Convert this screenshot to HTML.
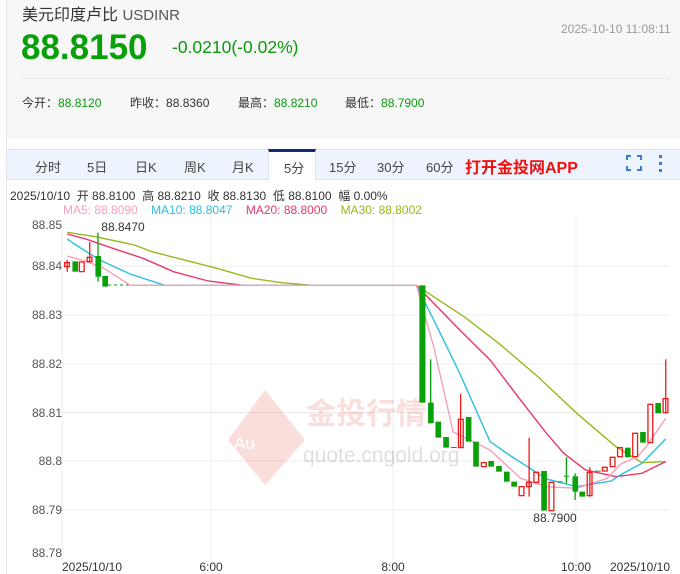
<!DOCTYPE html>
<html><head><meta charset="utf-8"><style>
*{margin:0;padding:0;box-sizing:border-box}
body{width:680px;height:574px;background:#fff;font-family:"Liberation Sans","Noto Sans CJK SC",sans-serif;position:relative;overflow:hidden}
.a{position:absolute;white-space:nowrap}
.g{color:#0a9a0a}
</style></head><body>
<div class="a" style="left:0;top:0;width:7px;height:574px;background:#fff;border-right:1px solid #e6e6e6"></div>
<div class="a" style="left:7px;top:0;width:673px;height:139px;background:#f7f7f7"></div>
<div class="a" style="left:22px;top:1px;font-size:16px;color:#333">美元印度卢比 <span style="font-size:15px;color:#555">USDINR</span></div>
<div class="a" style="left:561px;top:22px;font-size:12px;color:#999">2025-10-10 11:08:11</div>
<div class="a g" style="left:21px;top:28px;font-size:35px;font-weight:bold;color:#08a008">88.8150</div>
<div class="a g" style="left:172px;top:37px;font-size:17.5px">-0.0210(-0.02%)</div>
<div class="a" style="left:22px;top:78px;width:648px;height:1px;background:#e6e6e6"></div>
<div class="a" style="left:22px;top:94px;font-size:12px;color:#333">今开：<span class="g">88.8120</span></div>
<div class="a" style="left:130px;top:94px;font-size:12px;color:#333">昨收：<span>88.8360</span></div>
<div class="a" style="left:238px;top:94px;font-size:12px;color:#333">最高：<span class="g">88.8210</span></div>
<div class="a" style="left:345px;top:94px;font-size:12px;color:#333">最低：<span class="g">88.7900</span></div>
<div class="a" style="left:7px;top:149px;width:673px;height:31px;background:#eef4fd;border-top:1px solid #dde6f3;border-bottom:1px solid #dde6f3"></div>
<div class="a" style="left:268px;top:149px;width:48px;height:32px;background:#fff;border-top:3px solid #0d2a7d;border-left:1px solid #dde6f3;border-right:1px solid #dde6f3"></div>
<div class="a" style="top:157px;left:35px;font-size:13px;color:#444">分时</div>
<div class="a" style="top:157px;left:87px;font-size:13px;color:#444">5日</div>
<div class="a" style="top:157px;left:135px;font-size:13px;color:#444">日K</div>
<div class="a" style="top:157px;left:184px;font-size:13px;color:#444">周K</div>
<div class="a" style="top:157px;left:232px;font-size:13px;color:#444">月K</div>
<div class="a" style="top:158px;left:284px;font-size:13px;color:#444">5分</div>
<div class="a" style="top:157px;left:329px;font-size:13px;color:#444">15分</div>
<div class="a" style="top:157px;left:377px;font-size:13px;color:#444">30分</div>
<div class="a" style="top:157px;left:426px;font-size:13px;color:#444">60分</div>
<div class="a" style="top:154px;left:465px;font-size:16px;font-weight:bold;color:#f01010">打开金投网APP</div>
<svg class="a" style="left:626px;top:155px" width="16" height="16" viewBox="0 0 16 16" fill="none" stroke="#3a7bd5" stroke-width="2"><path d="M1 5V1H5M11 1H15V5M15 11V15H11M5 15H1V11"/></svg>
<svg class="a" style="left:658px;top:155px" width="6" height="18"><rect x="1" y="0" width="3" height="3" fill="#3a7bd5"/><rect x="1" y="7" width="3" height="3" fill="#3a7bd5"/><rect x="1" y="14" width="3" height="3" fill="#3a7bd5"/></svg>
<div class="a" style="left:10px;top:187px;font-size:12px;color:#333">2025/10/10 &nbsp;开 88.8100 &nbsp;高 88.8210 &nbsp;收 88.8130 &nbsp;低 88.8100 &nbsp;幅 0.00%</div>
<div class="a" style="left:63px;top:203px;font-size:12px"><span style="color:#f7a0ba">MA5: 88.8090</span>&nbsp;&nbsp;&nbsp; <span style="color:#2bbfe0">MA10: 88.8047</span>&nbsp;&nbsp;&nbsp; <span style="color:#e8396b">MA20: 88.8000</span>&nbsp;&nbsp;&nbsp; <span style="color:#99b81c">MA30: 88.8002</span></div>
<svg class="a" style="left:0;top:0" width="680" height="574">
<g stroke="#ececec" stroke-width="1">
<line x1="62" y1="266" x2="670" y2="266"/><line x1="62" y1="315" x2="670" y2="315"/><line x1="62" y1="364" x2="670" y2="364"/><line x1="62" y1="412.5" x2="670" y2="412.5"/><line x1="62" y1="461" x2="670" y2="461"/><line x1="62" y1="510" x2="670" y2="510"/>
<line x1="211" y1="218" x2="211" y2="562"/><line x1="393" y1="218" x2="393" y2="562"/><line x1="576" y1="218" x2="576" y2="562"/>
<line x1="62" y1="218" x2="62" y2="562"/>
</g>
<g font-size="12" fill="#555" font-family="Liberation Sans" text-anchor="end">
<text x="62" y="229">88.85</text><text x="62" y="270">88.84</text><text x="62" y="319">88.83</text><text x="62" y="368">88.82</text><text x="62" y="417">88.81</text><text x="62" y="465">88.8</text><text x="62" y="514">88.79</text><text x="62" y="557">88.78</text>
</g>
<g font-size="12" fill="#333" font-family="Liberation Sans" text-anchor="middle">
<text x="92" y="571">2025/10/10</text><text x="211" y="571">6:00</text><text x="393" y="571">8:00</text><text x="576" y="571">10:00</text><text x="640" y="571">2025/10/10</text>
<text x="123" y="231">88.8470</text><text x="555" y="522">88.7900</text>
</g>
<g opacity="0.18">
<path d="M265 390L305 440L265 485L228 440Z" fill="#e05040"/>
<text x="234" y="449" font-size="17" fill="#fff" font-family="Liberation Sans">Au</text>
<text x="306" y="424" font-size="30" font-weight="bold" fill="#e05040" font-family="Noto Sans CJK SC">金投行情</text>
</g>
<text x="303" y="462" font-size="21" fill="#000" opacity="0.12" font-family="Liberation Sans">quote.cngold.org</text>
<line x1="108" y1="285" x2="416" y2="285" stroke="#0a9a0a" stroke-dasharray="3,3"/>
<g transform="translate(0,220) scale(0.4337,0.3333)" fill="none" stroke-width="1.4">
<polyline vector-effect="non-scaling-stroke" stroke="#99b81c" points="155,37 220,50 310,75 350,95 500,145 580,175 650,188 720,196 960,196 1070,290 1150,370 1240,470 1330,580 1420,680 1480,728 1535,725"/>
<polyline vector-effect="non-scaling-stroke" stroke="#e8396b" points="155,42 200,58 260,85 330,115 400,155 480,183 560,196 960,196 1060,330 1130,420 1200,540 1260,640 1300,700 1350,750 1420,770 1480,760 1535,725"/>
<polyline vector-effect="non-scaling-stroke" stroke="#2bbfe0" points="155,57 175,75 230,120 300,162 380,196 960,196 1000,300 1060,460 1130,665 1180,710 1260,777 1330,800 1410,783 1430,765 1480,730 1535,657"/>
<polyline vector-effect="non-scaling-stroke" stroke="#f7a0ba" points="155,108 200,125 240,145 300,196 960,196 1000,380 1045,636 1130,690 1200,775 1260,800 1330,805 1400,775 1430,733 1470,710 1490,680 1535,595"/>
</g>
<g transform="translate(0,220) scale(0.4337,0.3333)">
<g fill="#0aa00a" stroke="#0aa00a" stroke-width="3">
<line x1="226" y1="38" x2="226" y2="185"/><line x1="993" y1="418" x2="993" y2="610"/><line x1="1306" y1="712" x2="1306" y2="790"/><line x1="1326" y1="760" x2="1326" y2="840"/>
</g>
<g fill="#0aa00a">
<rect x="167" y="124" width="13" height="31"/><rect x="220" y="108" width="13" height="62"/><rect x="236" y="168" width="13" height="32"/>
<rect x="967" y="196" width="14" height="352"/><rect x="987" y="548" width="13" height="62"/><rect x="1004" y="605" width="13" height="48"/><rect x="1022" y="651" width="13" height="32"/><rect x="1040" y="681" width="13" height="3"/>
<rect x="1074" y="591" width="13" height="74"/><rect x="1091" y="665" width="13" height="75"/><rect x="1126" y="723" width="13" height="17"/><rect x="1144" y="738" width="13" height="17"/><rect x="1162" y="755" width="13" height="30"/><rect x="1179" y="785" width="13" height="15"/>
<rect x="1248" y="753" width="13" height="119"/><rect x="1284" y="784" width="13" height="3"/><rect x="1300" y="767" width="13" height="3"/><rect x="1320" y="769" width="13" height="46"/><rect x="1336" y="815" width="13" height="15"/><rect x="1372" y="752" width="13" height="3"/>
<rect x="1441" y="683" width="13" height="29"/><rect x="1476" y="636" width="13" height="32"/><rect x="1511" y="549" width="13" height="31"/>
</g>
<g fill="none" stroke="#f01818" stroke-width="1.3">
<line x1="155" y1="120" x2="155" y2="155" vector-effect="non-scaling-stroke"/><line x1="207" y1="66" x2="207" y2="125" vector-effect="non-scaling-stroke"/><line x1="1062" y1="522" x2="1062" y2="683" vector-effect="non-scaling-stroke"/><line x1="1220" y1="653" x2="1220" y2="830" vector-effect="non-scaling-stroke"/><line x1="1535" y1="418" x2="1535" y2="578" vector-effect="non-scaling-stroke"/><line x1="1360" y1="742" x2="1360" y2="830" vector-effect="non-scaling-stroke"/>
<rect x="149" y="128" width="11" height="12" vector-effect="non-scaling-stroke"/><rect x="183" y="126" width="11" height="29" vector-effect="non-scaling-stroke"/><rect x="201" y="112" width="11" height="13" vector-effect="non-scaling-stroke"/>
<rect x="1057" y="598" width="11" height="85" vector-effect="non-scaling-stroke"/><rect x="1110" y="728" width="11" height="12" vector-effect="non-scaling-stroke"/><rect x="1197" y="800" width="11" height="27" vector-effect="non-scaling-stroke"/><rect x="1214" y="787" width="11" height="13" vector-effect="non-scaling-stroke"/><rect x="1231" y="757" width="11" height="30" vector-effect="non-scaling-stroke"/><rect x="1266" y="787" width="11" height="85" vector-effect="non-scaling-stroke"/><rect x="1354" y="757" width="11" height="70" vector-effect="non-scaling-stroke"/><rect x="1389" y="742" width="11" height="11" vector-effect="non-scaling-stroke"/><rect x="1407" y="712" width="11" height="28" vector-effect="non-scaling-stroke"/><rect x="1424" y="683" width="11" height="27" vector-effect="non-scaling-stroke"/><rect x="1459" y="640" width="11" height="70" vector-effect="non-scaling-stroke"/><rect x="1494" y="553" width="11" height="115" vector-effect="non-scaling-stroke"/><rect x="1529" y="536" width="11" height="42" vector-effect="non-scaling-stroke"/>
</g></g>
</svg>
</body></html>
